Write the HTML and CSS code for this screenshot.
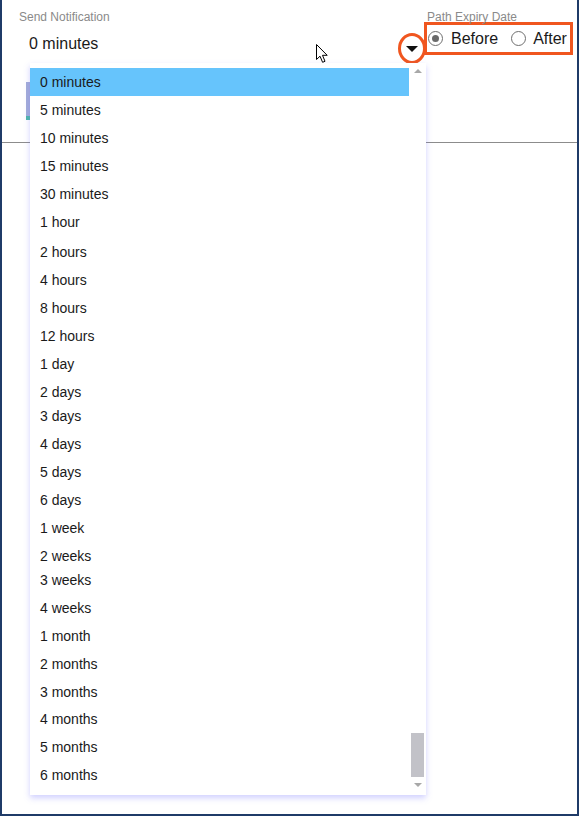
FILE: index.html
```html
<!DOCTYPE html>
<html lang="en">
<head>
    <meta charset="UTF-8">
    <meta name="viewport" content="width=device-width, initial-scale=1.0">
    <title>Send Notification</title>
    <link rel="stylesheet" href="styles.css">
</head>
<body>

    <div class="frame">
        <div class="fields">
            <div class="field notify">
                <div class="label">Send Notification</div>
                <div class="select-value">
                    <span>0 minutes</span>
                    <span class="arrow-ring"><span class="arrow"></span></span>
                </div>
            </div>
            <div class="field expiry">
                <div class="label">Path Expiry Date</div>
                <div class="radio-group">
                    <span class="radio checked"></span><span class="radio-text">Before</span>
                    <span class="radio"></span><span class="radio-text">After</span>
                </div>
            </div>
        </div>

        <div class="toolbar">
            <div class="tool-button"></div>
        </div>
        <div class="divider"></div>

        <!-- pointer -->
        <svg class="cursor" width="13" height="20" viewBox="0 0 13 20">
            <path d="M0.5 0.5 L0.5 15.5 L4 12.2 L6.6 18.3 L9 17.3 L6.5 11.3 L11.2 11.3 Z" fill="#fff" stroke="#000" stroke-width="1"/>
        </svg>

        <!-- open list -->
        <div class="dropdown">
            <ul class="options">
                <li class="selected">0 minutes</li>
                <li>5 minutes</li>
                <li>10 minutes</li>
                <li>15 minutes</li>
                <li>30 minutes</li>
                <li>1 hour</li>
                <li class="push">2 hours</li>
                <li>4 hours</li>
                <li>8 hours</li>
                <li>12 hours</li>
                <li>1 day</li>
                <li>2 days</li>
                <li class="pull">3 days</li>
                <li>4 days</li>
                <li>5 days</li>
                <li>6 days</li>
                <li>1 week</li>
                <li>2 weeks</li>
                <li class="pull">3 weeks</li>
                <li>4 weeks</li>
                <li>1 month</li>
                <li>2 months</li>
                <li>3 months</li>
                <li class="nudge">4 months</li>
                <li>5 months</li>
                <li>6 months</li>
            </ul>
            <div class="scrollbar">
                <span class="scroll-up"></span>
                <span class="thumb"></span>
                <span class="scroll-down"></span>
            </div>
        </div>
    </div>

</body>
</html>
```

FILE: styles.css
```css
body {
    margin: 0;
    padding: 0;
    background-color: #ffffff;
    font-family: 'Liberation Sans', Arial, sans-serif;
    color: #1a1a1a;
}
.frame {
    position: relative;
    width: 575px;
    height: 814px;
    border-left: 2px solid #1f3b68;
    border-right: 2px solid #1f3b68;
    border-bottom: 2px solid #1f3b68;
    background-color: #ffffff;
}
.fields {
    display: flex;
    padding: 10px 0 0 17px;
}
.label {
    font-size: 12px;
    line-height: 14px;
    color: #8a8a8a;
}
.notify {
    width: 408px;
}
.select-value {
    display: flex;
    justify-content: space-between;
    align-items: flex-start;
    margin-top: 10px;
    padding-left: 10px;
    font-size: 16px;
    line-height: 20px;
}
.arrow-ring {
    display: flex;
    justify-content: center;
    align-items: center;
    width: 22px;
    height: 25px;
    margin-right: 1px;
    margin-top: -1px;
    border: 3px solid #f0561f;
    border-radius: 50%;
}
.arrow {
    width: 0;
    height: 0;
    border-left: 6px solid transparent;
    border-right: 6px solid transparent;
    border-top: 6px solid #111;
    margin-top: 1px;
}
.expiry {
    margin-left: -3px;
}
.expiry .label {
    padding-left: 3px;
}
.radio-group {
    display: flex;
    align-items: center;
    width: 143px;
    height: 27px;
    margin-top: -2px;
    border: 3px solid #f0561f;
    font-size: 16px;
}
.radio {
    flex-shrink: 0;
    width: 13px;
    height: 13px;
    margin: 0 7px 0 1px;
    border: 1px solid #6f6f6f;
    border-radius: 50%;
    background-color: #fff;
    position: relative;
}
.radio.checked {
    margin-right: 8px;
}
.radio.checked::after {
    content: '';
    position: absolute;
    left: 3px;
    top: 3px;
    width: 7px;
    height: 7px;
    border-radius: 50%;
    background-color: #6a6a6a;
}
.radio-text {
    flex-shrink: 0;
    margin-right: 12px;
}
.toolbar {
    padding: 18px 0 0 24px;
}
.tool-button {
    width: 120px;
    height: 34px;
    background-color: #a3acd8;
    border-bottom: 4px solid #4db6a8;
}
.divider {
    margin-top: 22px;
    border-top: 1px solid #8c8c8c;
}
.cursor {
    position: absolute;
    left: 314px;
    top: 44px;
}
.dropdown {
    position: absolute;
    left: 28px;
    top: 63px;
    width: 396px;
    height: 732px;
    display: flex;
    background-color: #ffffff;
    box-shadow: 0 3px 6px rgba(120, 120, 255, 0.35);
}
.options {
    list-style: none;
    margin: 0;
    padding: 5px 0 0 0;
    width: 379px;
}
.options li {
    height: 28px;
    line-height: 28px;
    padding-left: 10px;
    font-size: 14px;
}
.options li.selected {
    background-color: #66c4fc;
}
.options li.push {
    margin-top: 2px;
}
.options li.pull {
    margin-top: -4px;
}
.options li.nudge {
    margin-top: -1px;
}
.scrollbar {
    position: relative;
    width: 17px;
}
.scroll-up,
.scroll-down {
    position: absolute;
    left: 5px;
    width: 0;
    height: 0;
    border-left: 4px solid transparent;
    border-right: 4px solid transparent;
}
.scroll-up {
    top: 6px;
    border-bottom: 4px solid #a8a8a8;
}
.scroll-down {
    top: 720px;
    border-top: 4px solid #a8a8a8;
}
.thumb {
    position: absolute;
    left: 2px;
    top: 670px;
    width: 13px;
    height: 44px;
    background-color: #c2c2c8;
}
```
